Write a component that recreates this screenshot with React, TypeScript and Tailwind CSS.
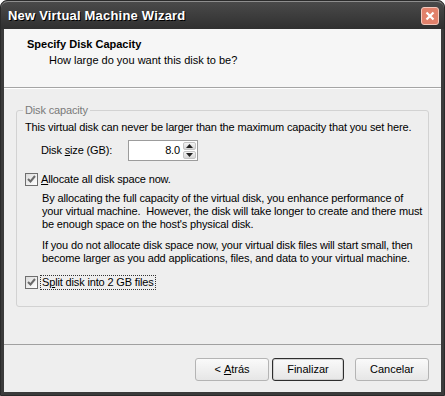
import React from 'react';

const font = "font-['Liberation_Sans',Arial,sans-serif]";

const CheckBox = () => {
  return (
    <span className="w-[13px] h-[13px] shrink-0 border border-[#6e6e6e] bg-gradient-to-br from-[#dcdcdc] to-[#ffffff] flex items-center justify-center">
      <svg width="9" height="9" viewBox="0 0 9 9">
        <path d="M1 4 L3.5 6.5 L8 1" stroke="#6a6a6a" strokeWidth="2" fill="none" />
      </svg>
    </span>
  );
};

const Button = ({ children, isDefault, w }: { children: React.ReactNode; isDefault?: boolean; w: string }) => {
  return (
    <button
      className={
        'h-[23px] rounded-[3px] text-[11px] text-black bg-gradient-to-b from-[#fafafa] to-[#e6e6e6] flex items-center justify-center ' +
        w +
        (isDefault ? ' border border-[#2e2e2e] shadow-[inset_0_0_0_1px_#cfcfcf]' : ' border border-[#b4b4b4]')
      }
    >
      {children}
    </button>
  );
};

export default function App() {
  return (
    <div className={'w-[445px] h-[396px] bg-white overflow-hidden text-[11px] text-black ' + font}>
      <div className="flex flex-col h-full rounded-t-[7px] bg-[#3b3b3b] border border-[#2a2a2a]">
        {/* Title bar */}
        <div className="h-[28px] shrink-0 flex items-center justify-between pl-[7px] pr-[5px] rounded-t-[7px] border-t border-[#8e8e8e] bg-gradient-to-b from-[#4a4a4a] to-[#303030]">
          <span className="text-white font-bold text-[13px] [text-shadow:1px_1px_#000] tracking-[0.2px]">New Virtual Machine Wizard</span>
          <span className="w-[18px] h-[18px] rounded-[3px] border border-[#f3c9bd] bg-[#e2816b] flex items-center justify-center">
            <svg width="10" height="10" viewBox="0 0 10 10">
              <path d="M1.5 1.5 L8.5 8.5 M8.5 1.5 L1.5 8.5" stroke="#fff" strokeWidth="2.2" />
            </svg>
          </span>
        </div>

        {/* Client area */}
        <div className="flex-1 mx-[3px] mb-[3px] flex flex-col bg-[#eeeeee]">
          {/* Header */}
          <div className="h-[59px] shrink-0 bg-[#f6f6f6] border-b border-[#a5a5a5] pl-[23px] pt-[7px] leading-[16px]">
            <div className="font-bold">Specify Disk Capacity</div>
            <div className="pl-[22px]">How large do you want this disk to be?</div>
          </div>

          {/* Body */}
          <div className="flex-1 flex flex-col border-t border-white px-[12px] pt-[15px]">
            <fieldset className="border border-[#d2d2d2] rounded-[3px] pl-[8px] pb-[16px] leading-[13px] tracking-[-0.15px]">
              <legend className="px-[2px] -ml-[2px] text-[#7a7a7a]">Disk capacity</legend>
              <div className="mt-[4px] whitespace-nowrap">This virtual disk can never be larger than the maximum capacity that you set here.</div>

              <div className="mt-[6px] flex items-center">
                <span className="w-[103px] pl-[16px] whitespace-nowrap">
                  Disk <span className="underline">s</span>ize (GB):
                </span>
                <div className="w-[70px] h-[21px] border border-[#9c9c9c] bg-white flex items-center justify-end pr-[1px]">
                  <span className="mr-[3px]">8.0</span>
                  <div className="w-[13px] h-[17px] flex flex-col gap-[1px]">
                    <span className="flex-1 rounded-[2px] bg-gradient-to-b from-[#f4f4f4] to-[#d6d6d6] border border-[#c4c4c4] flex items-center justify-center">
                      <svg width="7" height="4" viewBox="0 0 7 4"><path d="M0 4 L3.5 0 L7 4 Z" fill="#222" /></svg>
                    </span>
                    <span className="flex-1 rounded-[2px] bg-gradient-to-b from-[#f4f4f4] to-[#d6d6d6] border border-[#c4c4c4] flex items-center justify-center">
                      <svg width="7" height="4" viewBox="0 0 7 4"><path d="M0 0 L3.5 4 L7 0 Z" fill="#222" /></svg>
                    </span>
                  </div>
                </div>
              </div>

              <div className="mt-[12px] flex items-center gap-[3px]">
                <CheckBox />
                <span>
                  <span className="underline">A</span>llocate all disk space now.
                </span>
              </div>

              <div className="mt-[6px] pl-[17px] whitespace-nowrap">
                <p>
                  By allocating the full capacity of the virtual disk, you enhance performance of
                  <br />
                  your virtual machine.&nbsp; However, the disk will take longer to create and there must
                  <br />
                  be enough space on the host's physical disk.
                </p>
                <p className="mt-[8px]">
                  If you do not allocate disk space now, your virtual disk files will start small, then
                  <br />
                  become larger as you add applications, files, and data to your virtual machine.
                </p>
              </div>

              <div className="mt-[10px] flex items-center gap-[2px]">
                <CheckBox />
                <span className="border border-dotted border-[#333] px-[1px]">
                  S<span className="underline">p</span>lit disk into 2 GB files
                </span>
              </div>
            </fieldset>
          </div>

          {/* Footer */}
          <div className="shrink-0 border-t border-[#a0a0a0] flex justify-end items-center pt-[13px] pb-[11px] pr-[12px]">
            <Button w="w-[74px]">
              &lt; <span className="underline ml-[3px]">A</span>trás
            </Button>
            <div className="ml-[3px]">
              <Button w="w-[72px]" isDefault>
                Finalizar
              </Button>
            </div>
            <div className="ml-[11px]">
              <Button w="w-[74px]">Cancelar</Button>
            </div>
          </div>
        </div>
      </div>
    </div>
  );
}
